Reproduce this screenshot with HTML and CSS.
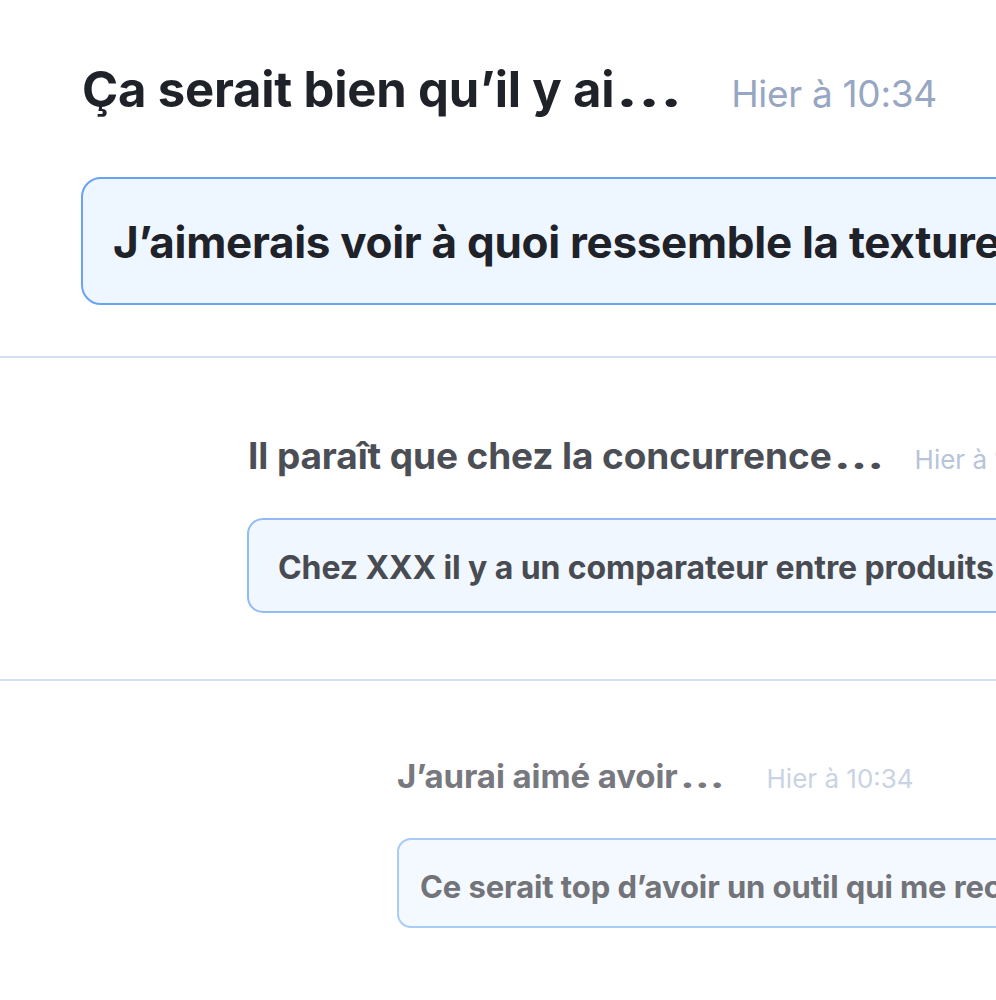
FILE: index.html
```html
<!DOCTYPE html>
<html lang="fr">
<head>
	<meta charset="UTF-8">
	<meta name="viewport" content="width=device-width, initial-scale=1.0">
	<title>Suggestions</title>
	<link rel="stylesheet" href="styles.css">
</head>
<body>
	<div id="feed">

		<div class="item item1">
			<div class="head">
				<h2 class="title">Ça serait bien qu’il y ai<span class="dots">…</span></h2>
				<span class="time">Hier à 10:34</span>
			</div>
			<div class="bubble">J’aimerais voir à quoi ressemble la texture du produit</div>
		</div>

		<div class="item item2">
			<div class="head">
				<h2 class="title">Il paraît que chez la concurrence<span class="dots">…</span></h2>
				<span class="time">Hier à 10:34</span>
			</div>
			<div class="bubble">Chez XXX il y a un comparateur entre produits</div>
		</div>

		<div class="item item3">
			<div class="head">
				<h2 class="title">J’aurai aimé avoir<span class="dots">…</span></h2>
				<span class="time">Hier à 10:34</span>
			</div>
			<div class="bubble">Ce serait top d’avoir un outil qui me recommande</div>
		</div>

	</div>
</body>
</html>
```

FILE: styles.css
```css
*{
	margin: 0;
	padding: 0;
	box-sizing: border-box;
}
body{
	background-color: #ffffff;
	font-family: Inter, "Noto Sans", sans-serif;
	overflow: hidden;
	width: 996px;
	height: 1000px;
}
#feed{
	width: 996px;
	overflow: hidden;
}
.item{
	overflow: hidden;
	border-top: 2px solid #d3deee;
}
.item1{
	border-top: none;
	padding: 61px 0 51px 81px;
}
.item2{
	padding: 76px 0 66px 247px;
}
.item3{
	padding: 75px 0 80px 397px;
}
.head{
	display: flex;
	align-items: baseline;
	white-space: nowrap;
}
.title{
	font-weight: 700;
}
/* points de suspension plus larges */
.dots{
	display: inline-block;
	transform: scaleX(1.35);
	transform-origin: left center;
	margin-left: 2px;
}
.time{
	font-weight: 400;
}
.bubble{
	white-space: nowrap;
	font-weight: 700;
	border: 2px solid #6aa2f4;
	margin-right: -600px;
}

/* premier */
.item1 .title{
	font-size: 49px;
	line-height: 58px;
	color: #1f2229;
	letter-spacing: -0.2px;
	padding-left: 1px;
}
.item1 .time{
	font-size: 37px;
	color: #97a6c2;
	margin-left: 66px;
	letter-spacing: -0.3px;
}
.item1 .bubble{
	margin-top: 58px;
	font-size: 44px;
	line-height: 52px;
	padding: 37px 0 35px 30px;
	border-radius: 20px;
	background-color: #eef6ff;
	color: #1f2229;
	letter-spacing: -0.3px;
}

/* deuxieme */
.item2 .title{
	font-size: 37px;
	line-height: 44px;
	color: #4b4e55;
	letter-spacing: -0.1px;
	padding-left: 1px;
}
.item2 .time{
	font-size: 26px;
	color: #b7c4da;
	margin-left: 44px;
}
.item2 .bubble{
	margin-top: 40px;
	font-size: 32px;
	line-height: 40px;
	padding: 28px 0 23px 29px;
	border-radius: 16px;
	border-color: #90bbf5;
	background-color: #f0f7fe;
	color: #484b51;
	letter-spacing: -0.1px;
}

/* troisieme */
.item3 .title{
	font-size: 33px;
	line-height: 40px;
	color: #77797f;
	letter-spacing: -0.1px;
}
.item3 .time{
	font-size: 26px;
	color: #c9d3e3;
	margin-left: 54px;
}
.item3 .bubble{
	margin-top: 42px;
	font-size: 31px;
	line-height: 38px;
	padding: 28px 0 20px 21px;
	border-radius: 14px;
	border-color: #a8cbf7;
	background-color: #f4f9ff;
	color: #727479;
	letter-spacing: -0.1px;
}
```
